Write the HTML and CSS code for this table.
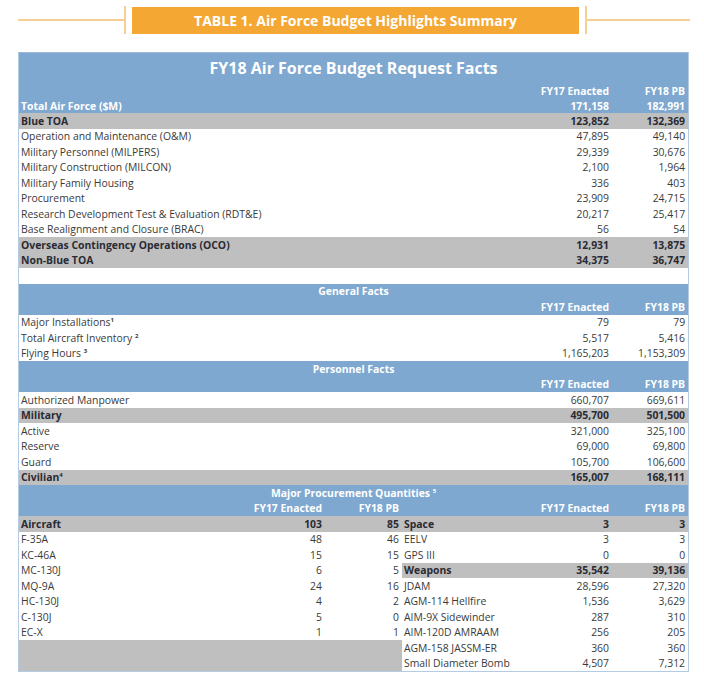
FILE: index.html
```html
<!DOCTYPE html>
<html>
<head>
<meta charset="utf-8">
<link rel="stylesheet" href="styles.css">
</head>
<body>
<div class="page">
  <div class="banner">
    <div class="b-line b-line-left"></div>
    <div class="b-bar"></div>
    <div class="b-box">TABLE 1. Air Force Budget Highlights Summary</div>
    <div class="b-bar"></div>
    <div class="b-line b-line-right"></div>
  </div>

  <div class="table-wrap">
    <table class="facts">
      <colgroup>
        <col class="c1"><col class="c2"><col class="c3"><col class="c4"><col class="c5"><col class="c6">
      </colgroup>
      <tbody>
        <tr class="blue title-row"><td colspan="6" class="main-title">FY18 Air Force Budget Request Facts</td></tr>
        <tr class="blue short"><td colspan="4"></td><td class="num">FY17 Enacted</td><td class="num">FY18 PB</td></tr>
        <tr class="blue short"><td colspan="4" class="lbl">Total Air Force ($M)</td><td class="num">171,158</td><td class="num">182,991</td></tr>
        <tr class="gray bold"><td colspan="4" class="lbl">Blue TOA</td><td class="num">123,852</td><td class="num">132,369</td></tr>
        <tr><td colspan="4" class="lbl">Operation and Maintenance (O&amp;M)</td><td class="num">47,895</td><td class="num">49,140</td></tr>
        <tr><td colspan="4" class="lbl">Military Personnel (MILPERS)</td><td class="num">29,339</td><td class="num">30,676</td></tr>
        <tr><td colspan="4" class="lbl">Military Construction (MILCON)</td><td class="num">2,100</td><td class="num">1,964</td></tr>
        <tr><td colspan="4" class="lbl">Military Family Housing</td><td class="num">336</td><td class="num">403</td></tr>
        <tr><td colspan="4" class="lbl">Procurement</td><td class="num">23,909</td><td class="num">24,715</td></tr>
        <tr><td colspan="4" class="lbl">Research Development Test &amp; Evaluation (RDT&amp;E)</td><td class="num">20,217</td><td class="num">25,417</td></tr>
        <tr><td colspan="4" class="lbl">Base Realignment and Closure (BRAC)</td><td class="num">56</td><td class="num">54</td></tr>
        <tr class="gray bold"><td colspan="4" class="lbl">Overseas Contingency Operations (OCO)</td><td class="num">12,931</td><td class="num">13,875</td></tr>
        <tr class="gray bold"><td colspan="4" class="lbl">Non-Blue TOA</td><td class="num">34,375</td><td class="num">36,747</td></tr>
        <tr><td colspan="6"></td></tr>

        <tr class="blue"><td colspan="6" class="sec-title">General Facts</td></tr>
        <tr class="blue"><td colspan="4"></td><td class="num">FY17 Enacted</td><td class="num">FY18 PB</td></tr>
        <tr><td colspan="4" class="lbl">Major Installations<sup>1</sup></td><td class="num">79</td><td class="num">79</td></tr>
        <tr><td colspan="4" class="lbl">Total Aircraft Inventory <sup>2</sup></td><td class="num">5,517</td><td class="num">5,416</td></tr>
        <tr><td colspan="4" class="lbl">Flying Hours <sup>3</sup></td><td class="num">1,165,203</td><td class="num">1,153,309</td></tr>

        <tr class="blue"><td colspan="6" class="sec-title">Personnel Facts</td></tr>
        <tr class="blue"><td colspan="4"></td><td class="num">FY17 Enacted</td><td class="num">FY18 PB</td></tr>
        <tr><td colspan="4" class="lbl">Authorized Manpower</td><td class="num">660,707</td><td class="num">669,611</td></tr>
        <tr class="gray bold"><td colspan="4" class="lbl">Military</td><td class="num">495,700</td><td class="num">501,500</td></tr>
        <tr><td colspan="4" class="lbl">Active</td><td class="num">321,000</td><td class="num">325,100</td></tr>
        <tr><td colspan="4" class="lbl">Reserve</td><td class="num">69,000</td><td class="num">69,800</td></tr>
        <tr><td colspan="4" class="lbl">Guard</td><td class="num">105,700</td><td class="num">106,600</td></tr>
        <tr class="gray bold"><td colspan="4" class="lbl">Civilian<sup>4</sup></td><td class="num">165,007</td><td class="num">168,111</td></tr>

        <tr class="blue"><td colspan="6" class="sec-title">Major Procurement Quantities <sup>5</sup></td></tr>
        <tr class="blue"><td></td><td class="num">FY17 Enacted</td><td class="num">FY18 PB</td><td></td><td class="num">FY17 Enacted</td><td class="num">FY18 PB</td></tr>
        <tr class="gray bold"><td class="lbl">Aircraft</td><td class="num">103</td><td class="num">85</td><td class="lbl">Space</td><td class="num">3</td><td class="num">3</td></tr>
        <tr><td class="lbl">F-35A</td><td class="num">48</td><td class="num">46</td><td class="lbl">EELV</td><td class="num">3</td><td class="num">3</td></tr>
        <tr><td class="lbl">KC-46A</td><td class="num">15</td><td class="num">15</td><td class="lbl">GPS III</td><td class="num">0</td><td class="num">0</td></tr>
        <tr><td class="lbl">MC-130J</td><td class="num">6</td><td class="num">5</td><td class="lbl g bold">Weapons</td><td class="num g bold">35,542</td><td class="num g bold">39,136</td></tr>
        <tr><td class="lbl">MQ-9A</td><td class="num">24</td><td class="num">16</td><td class="lbl">JDAM</td><td class="num">28,596</td><td class="num">27,320</td></tr>
        <tr><td class="lbl">HC-130J</td><td class="num">4</td><td class="num">2</td><td class="lbl">AGM-114 Hellfire</td><td class="num">1,536</td><td class="num">3,629</td></tr>
        <tr><td class="lbl">C-130J</td><td class="num">5</td><td class="num">0</td><td class="lbl">AIM-9X Sidewinder</td><td class="num">287</td><td class="num">310</td></tr>
        <tr><td class="lbl">EC-X</td><td class="num">1</td><td class="num">1</td><td class="lbl">AIM-120D AMRAAM</td><td class="num">256</td><td class="num">205</td></tr>
        <tr><td colspan="3" rowspan="2" class="g"></td><td class="lbl">AGM-158 JASSM-ER</td><td class="num">360</td><td class="num">360</td></tr>
        <tr><td class="lbl">Small Diameter Bomb</td><td class="num">4,507</td><td class="num">7,312</td></tr>
      </tbody>
    </table>
  </div>
</div>
</body>
</html>
```

FILE: styles.css
```css
html, body {
  margin: 0;
  padding: 0;
  background: #ffffff;
}

.page {
  padding: 6px 0 0 18px;
  font-family: "Open Sans", "Liberation Sans", sans-serif;
  color: #3a3a3a;
}

.banner {
  display: flex;
  align-items: center;
  width: 672px;
  height: 28px;
}

.b-line {
  height: 0;
  border-top: 2px solid #f6cf95;
}

.b-line-left { width: 106px; }
.b-line-right { width: 103px; }

.b-bar {
  width: 2px;
  height: 28px;
  background: #f6cf95;
}

.b-box {
  margin: 0 6px;
  width: 447px;
  height: 27px;
  background: #f4a733;
  color: #ffffff;
  font-weight: 700;
  font-size: 14px;
  display: flex;
  align-items: center;
  justify-content: center;
}

.table-wrap {
  margin-top: 18px;
  width: 669px;
  border: 1px solid #b4cbe3;
  border-top-color: #9dbbd9;
}

.facts {
  width: 669px;
  table-layout: fixed;
  border-collapse: collapse;
  border-spacing: 0;
  font-size: 10.4px;
}

.c1 { width: 221px; }
.c2 { width: 85px; }
.c3 { width: 77px; }
.c4 { width: 138px; }
.c5 { width: 72px; }
.c6 { width: 76px; }

.facts tr { height: 15.5px; }

.facts td {
  padding: 0;
  height: 15.5px;
  line-height: 14px;
  white-space: nowrap;
  overflow: visible;
}

.facts tr.short { height: 14.5px; }
.facts tr.short td { height: 14.5px; }

.lbl { padding-left: 2px !important; }
.num { text-align: right; padding-right: 3px !important; }

.blue td {
  background: #7ea8cf;
  color: #ffffff;
  font-weight: 700;
}

.facts tr.title-row { height: 31px; }
.facts tr.title-row td { height: 31px; line-height: 31px; }

.main-title {
  text-align: center;
  font-size: 16px;
}

.sec-title {
  text-align: center;
}

.gray td, td.g {
  background: #c0bfbf;
}

.bold td, td.bold {
  font-weight: 700;
  color: #2a2b33;
}

sup {
  font-size: 6px;
  line-height: 0;
  vertical-align: 4px;
  font-weight: 700;
}
```
